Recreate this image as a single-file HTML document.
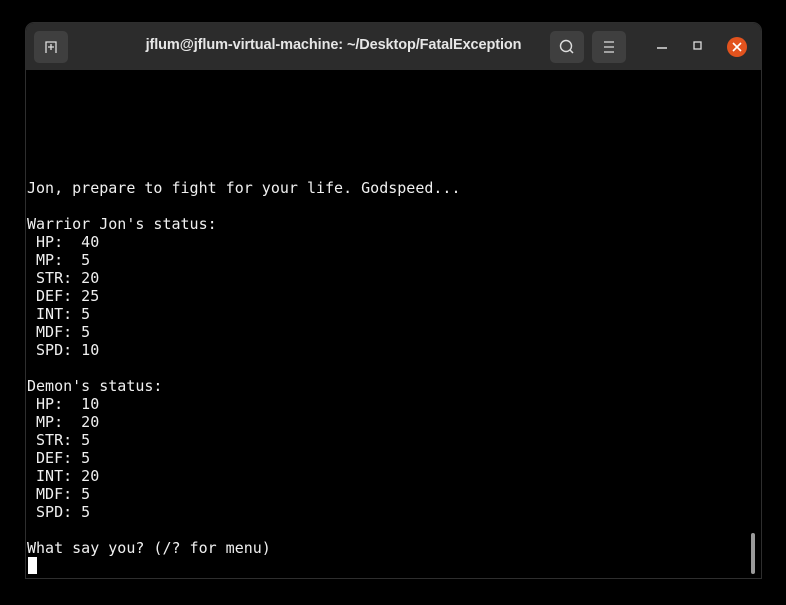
<!DOCTYPE html>
<html><head><style>
body{margin:0;width:786px;height:605px;background:#000;position:relative;overflow:hidden;font-family:"Liberation Sans",sans-serif}
.win{position:absolute;left:25px;top:22px;width:735px;height:555px;border:1px solid #2e2e2e;border-radius:9px 9px 0 0;background:#000;overflow:hidden}
.tb{position:absolute;left:0;top:0;width:735px;height:47px;background:#2c2c2c}
.btn{position:absolute;top:8px;width:34px;height:32px;background:#3f3f3f;border-radius:5px}
.title{position:absolute;left:60px;width:495px;top:14px;text-align:center;color:#e6e6e6;font-weight:bold;font-size:14.5px;letter-spacing:-0.1px;white-space:nowrap}
pre{position:absolute;left:1px;top:48px;margin:0;color:#f0f0f0;font-family:"DejaVu Sans Mono","Liberation Mono",monospace;font-size:15px;line-height:18px}
.cur{position:absolute;left:2px;top:534px;width:9px;height:17px;background:#fff}
.sb{position:absolute;left:725px;top:510px;width:4px;height:41px;background:#9a9a9a;border-radius:2px}
</style></head><body>
<div class="win">
<div class="tb">
<div class="btn" style="left:8px"><svg width="34" height="32"><path d="M12 22V11h10v11M14 16h6M17 13v6" stroke="#ddd" stroke-width="1.3" fill="none"/></svg></div>
<div class="title">jflum@jflum-virtual-machine: ~/Desktop/FatalException</div>
<div class="btn" style="left:524px"><svg width="34" height="32"><circle cx="16" cy="15" r="5.5" stroke="#ddd" stroke-width="1.4" fill="none"/><path d="M20 19l3 3" stroke="#ddd" stroke-width="1.5"/></svg></div>
<div class="btn" style="left:566px"><svg width="34" height="32"><path d="M12 11h10M12 16h10M12 21h10" stroke="#ddd" stroke-width="1.3"/></svg></div>
<svg style="position:absolute;left:620px;top:8px" width="110" height="32"><path d="M11 17h10" stroke="#ddd" stroke-width="1.4"/><rect x="48" y="11" width="7" height="7" stroke="#ddd" stroke-width="1.3" fill="none"/><circle cx="91" cy="16" r="10" fill="#e2531e"/><path d="M87 12l8 8M95 12l-8 8" stroke="#fff" stroke-width="1.6"/></svg>
</div>
<pre>






Jon, prepare to fight for your life. Godspeed...

Warrior Jon's status:
 HP:  40
 MP:  5
 STR: 20
 DEF: 25
 INT: 5
 MDF: 5
 SPD: 10

Demon's status:
 HP:  10
 MP:  20
 STR: 5
 DEF: 5
 INT: 20
 MDF: 5
 SPD: 5

What say you? (/? for menu)</pre>
<div class="cur"></div>
<div class="sb"></div>
</div>
</body></html>
